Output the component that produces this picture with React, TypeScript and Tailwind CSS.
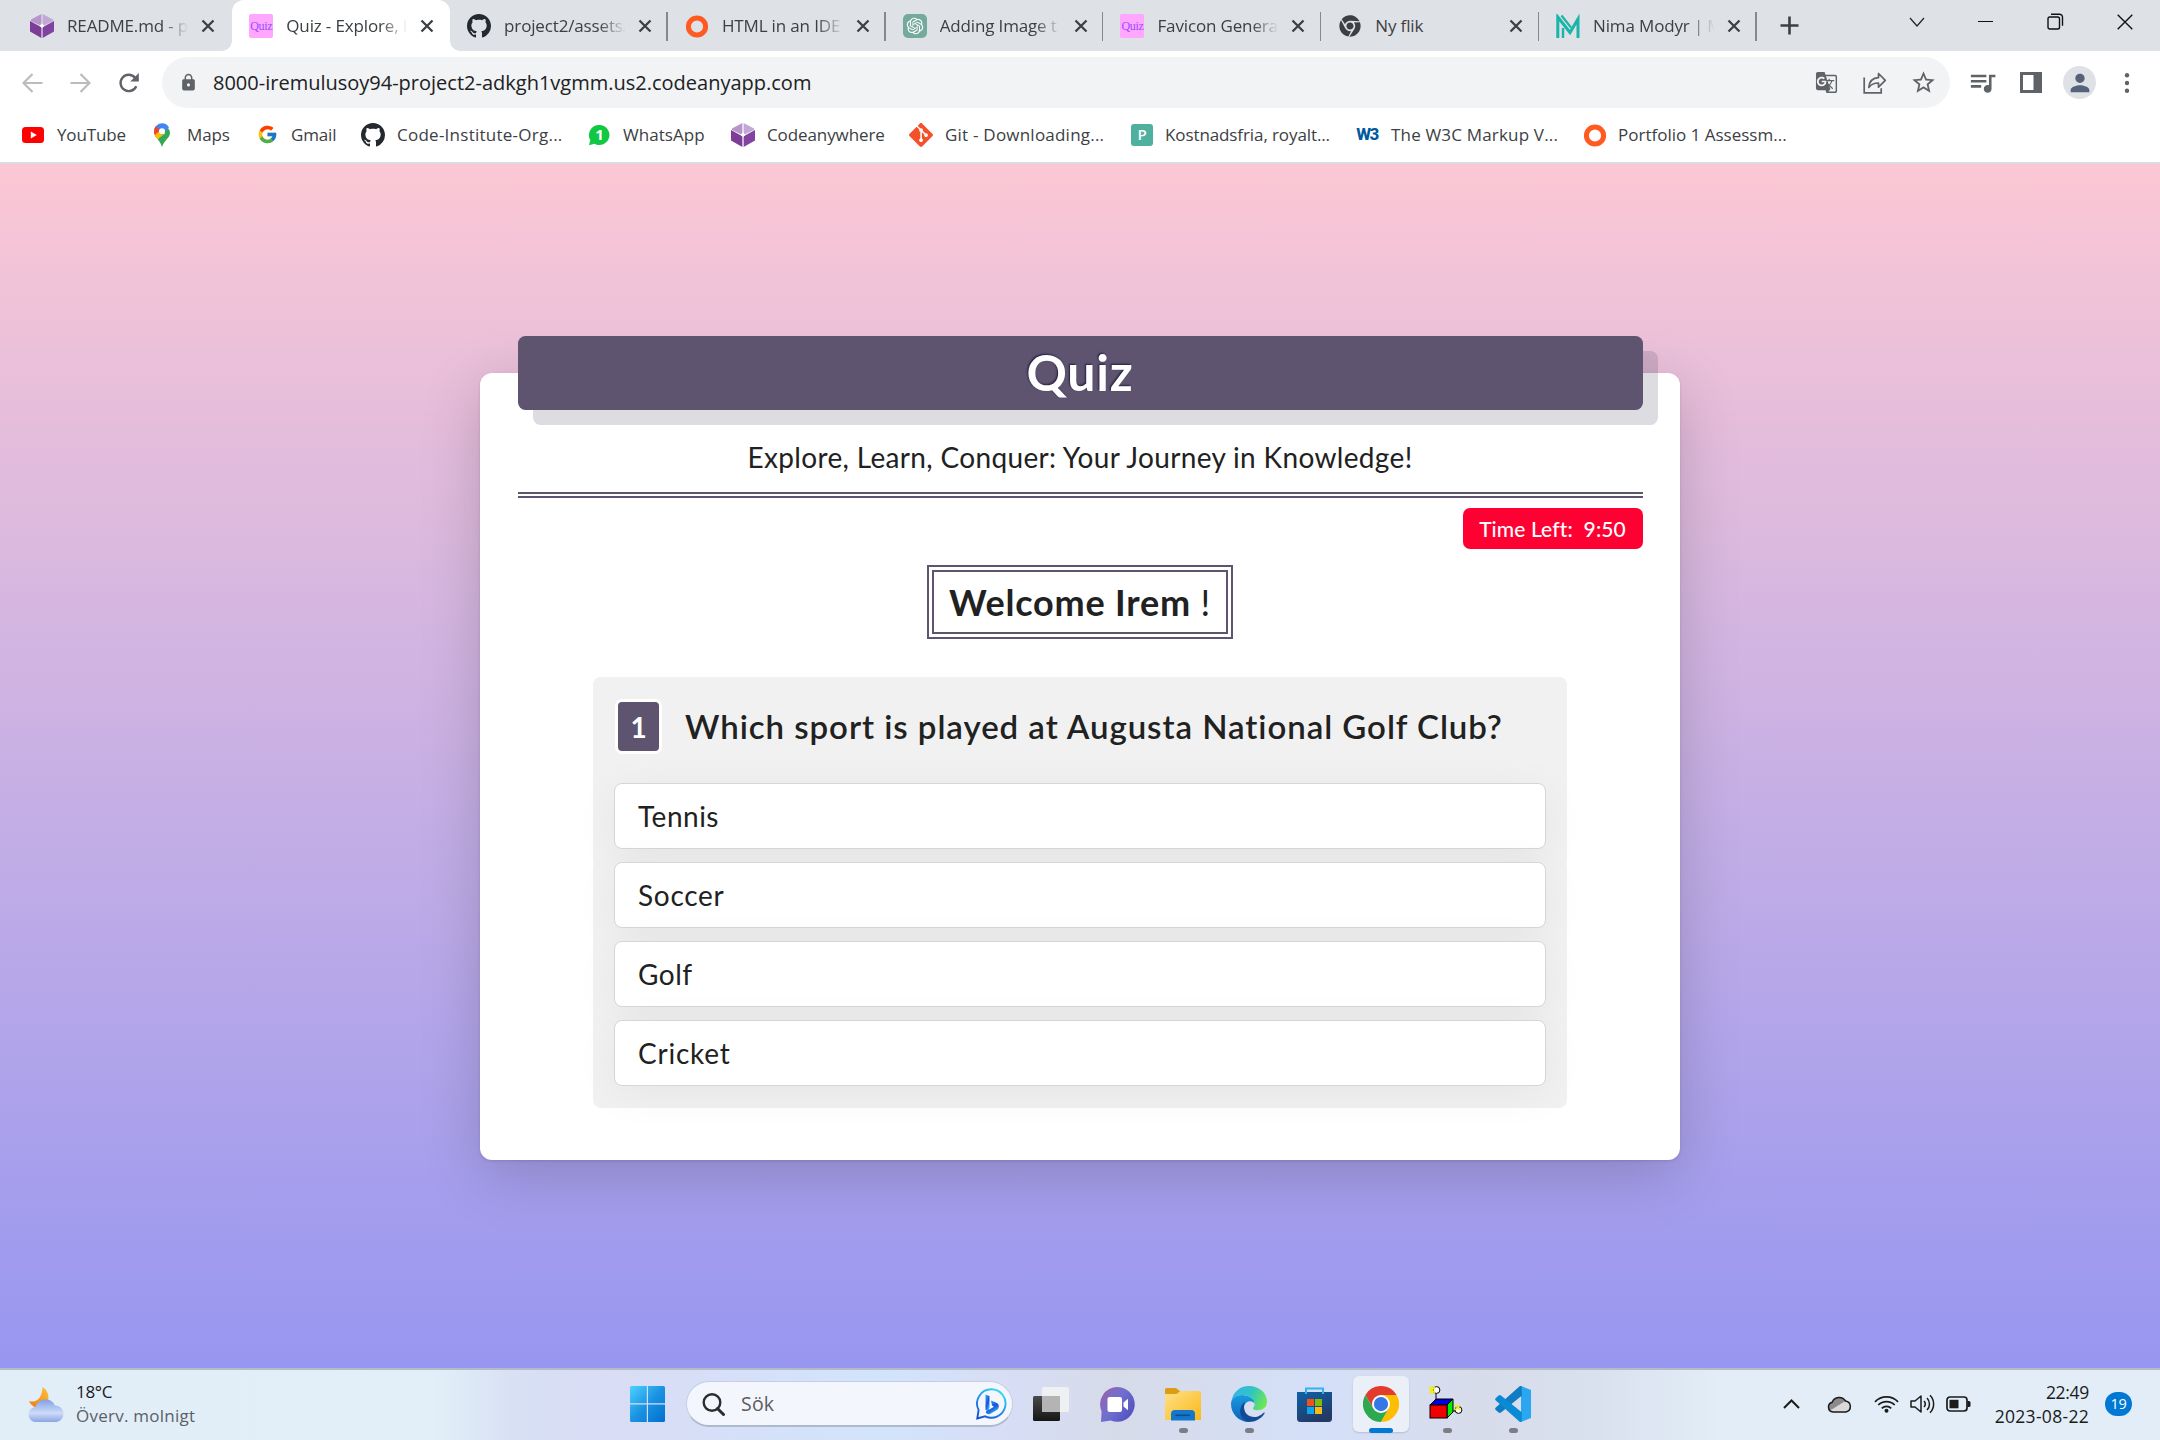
import React from "react";
import { FcGoogle } from "react-icons/fc";
import { FaChrome } from "react-icons/fa";
import { SiGit } from "react-icons/si";
import { RiOpenaiFill } from "react-icons/ri";
import { MdGTranslate, MdLock, MdPerson, MdQueueMusic, MdStarBorder } from "react-icons/md";

const UI = "font-['Open_Sans','Noto_Sans',sans-serif]";

/* ---------- small logos ---------- */

function HexLogo() {
  return (
    <svg width="24" height="24" viewBox="0 0 24 24">
      <path d="M11.4 0L1 5.6V7l10.4 5z" fill="#b795cb" />
      <path d="M12.6 0L23 5.6V7l-10.4 5z" fill="#c3a7d4" />
      <path d="M0 7l11.4 6.2V24L0 17.6z" fill="#7d3c98" />
      <path d="M24 7l-11.4 6.2V24L24 17.6z" fill="#8243a0" />
      <path d="M12 9.5l2.4 2.3L12 14l-2.4-2.2z" fill="#fff" />
    </svg>
  );
}

function QuizLogo() {
  return (
    <div className="flex h-6 w-6 items-center justify-center rounded-[2px] bg-[#ffa6ff] font-['Liberation_Serif',serif] text-[12px] leading-none tracking-[-0.3px] text-[#9a4dff]">
      Quiz
    </div>
  );
}

function GithubLogo() {
  return (
    <svg width="24" height="24" viewBox="0 0 16 16" fill="#24292f">
      <path d="M8 0C3.58 0 0 3.58 0 8c0 3.54 2.29 6.53 5.47 7.59.4.07.55-.17.55-.38 0-.19-.01-.82-.01-1.49-2.01.37-2.53-.49-2.69-.94-.09-.23-.48-.94-.82-1.13-.28-.15-.68-.52-.01-.53.63-.01 1.08.58 1.23.82.72 1.21 1.87.87 2.33.66.07-.52.28-.87.51-1.07-1.78-.2-3.64-.89-3.64-3.95 0-.87.31-1.59.82-2.15-.08-.2-.36-1.02.08-2.12 0 0 .67-.21 2.2.82.64-.18 1.32-.27 2-.27.68 0 1.36.09 2 .27 1.53-1.04 2.2-.82 2.2-.82.44 1.1.16 1.92.08 2.12.51.56.82 1.27.82 2.15 0 3.07-1.87 3.75-3.65 3.95.29.25.54.73.54 1.48 0 1.07-.01 1.93-.01 2.2 0 .21.15.46.55.38A8.013 8.013 0 0016 8c0-4.42-3.58-8-8-8z" />
    </svg>
  );
}

function RingLogo() {
  return (
    <svg width="24" height="24" viewBox="0 0 24 24">
      <circle cx="12" cy="12.5" r="8.6" fill="none" stroke="#ff5a1f" strokeWidth="5" />
    </svg>
  );
}

function OpenAiLogo() {
  return (
    <div className="flex h-6 w-6 items-center justify-center rounded-[5px] bg-[#74aa9c] text-white">
      <RiOpenaiFill size={20} />
    </div>
  );
}

function NimaLogo() {
  return (
    <svg width="24" height="24" viewBox="0 0 24 24">
      <g fill="none" stroke="#1ab5a8" strokeWidth="3">
        <path d="M1.8 24V3L14 18.5 22 5v19" />
        <path d="M7 24V14" strokeWidth="2.4" />
        <path d="M5.5 1.5L15 13.5" strokeWidth="2.2" />
      </g>
    </svg>
  );
}

function YoutubeLogo() {
  return (
    <svg width="24" height="24" viewBox="0 0 24 24">
      <rect x="1" y="4" width="22" height="16" rx="3.5" fill="#f00" />
      <path d="M9.8 8.6v6.8l6-3.4z" fill="#fff" />
    </svg>
  );
}

function MapsLogo() {
  return (
    <svg width="24" height="24" viewBox="0 0 24 24">
      <path d="M12 24c-1-3.400-2.700-5.600-4.500-8L17 4.500c1.800 1 3 3 3 5.200 0 5.300-5.500 6.800-8 14.300z" fill="#34a853" />
      <path d="M7.500 16C5.500 13.500 4 12 4 9l8-1 3.500 2.500z" fill="#fbbc04" />
      <path d="M4 8.300C4 6 5 4 6.400 2.700L12 8l-6 6.200C4.800 12.500 4 11 4 8.300z" fill="#ea4335" />
      <path d="M4.800 12.300L9.500 7l2.700 5-4.500 4.300c-1.200-1.500-2.300-2.600-2.900-4z" fill="#fbbc04" />
      <path d="M6 3.200C7.500 1.200 9.600.2 12 .2c3 0 5.600 1.600 7 4.200l-7 7.600-5-4.500z" fill="#4285f4" />
      <path d="M6 3.200l4 3.400-3 3.600L4.200 7c.2-1.500.8-2.700 1.800-3.800z" fill="#ea4335" />
      <circle cx="12" cy="8.300" r="3" fill="#fff" />
    </svg>
  );
}

function WhatsappLogo() {
  return (
    <div className="relative flex h-6 w-6 items-center justify-center">
      <svg className="absolute inset-0" width="24" height="24" viewBox="0 0 24 24">
        <path d="M12.500 2a10 10 0 1 1-5 18.700L2 22.300l1.300-5.300A10 10 0 0 1 12.500 2z" fill="#10c843" />
      </svg>
      <span className="relative pl-px font-['Open_Sans',sans-serif] text-[15px] leading-none font-bold text-white">1</span>
    </div>
  );
}

function PexelsLogo() {
  return (
    <div className="mx-[1px] flex h-[22px] w-[22px] items-center justify-center rounded-[3px] bg-[#4fb0a0] font-['Open_Sans',sans-serif] text-[15px] leading-none font-semibold text-white">
      P
    </div>
  );
}

function W3Logo() {
  return (
    <div className="flex h-6 w-6 items-center justify-center font-['Roboto',sans-serif] text-[17px] leading-none font-extrabold tracking-[-1.5px] text-[#005a9c]">
      W3
    </div>
  );
}

/* ---------- tab strip ---------- */

type Tab = { icon: React.ReactNode; title: string; active?: boolean; sep?: boolean; fade?: boolean };

const tabs: Tab[] = [
  { icon: <HexLogo />, title: "README.md - p", fade: true },
  { icon: <QuizLogo />, title: "Quiz - Explore, L", active: true, fade: true },
  { icon: <GithubLogo />, title: "project2/assets/", sep: true, fade: true },
  { icon: <RingLogo />, title: "HTML in an IDE", sep: true, fade: true },
  { icon: <OpenAiLogo />, title: "Adding Image t", sep: true, fade: true },
  { icon: <QuizLogo />, title: "Favicon Genera", sep: true, fade: true },
  { icon: <FaChrome size={22} color="#3c4043" />, title: "Ny flik", sep: true },
  { icon: <NimaLogo />, title: "Nima Modyr | M", sep: true, fade: true },
];

function TabItem({ tab, first }: { tab: Tab; first: boolean }) {
  return (
    <div
      className={
        "relative flex h-[51px] w-[217.8px] shrink-0 items-center " +
        (first ? "pl-[15.5px] " : "pl-[17px] ") +
        (tab.active ? "rounded-t-[12px] bg-white" : "")
      }
    >
      {tab.active && (
        <>
          <span className="absolute bottom-0 -left-[10px] h-[10px] w-[10px] bg-[radial-gradient(circle_at_0_0,transparent_9.5px,white_10px)]" />
          <span className="absolute -right-[10px] bottom-0 h-[10px] w-[10px] bg-[radial-gradient(circle_at_100%_0,transparent_9.5px,white_10px)]" />
        </>
      )}
      <span className="flex w-6 justify-center">{tab.icon}</span>
      <span
        className={
          "ml-[13px] w-[124px] overflow-hidden text-[17px] leading-[26px] tracking-[-0.15px] whitespace-nowrap text-[#3c4043] " +
          (tab.fade ? "[mask-image:linear-gradient(to_right,black_76%,transparent_98%)]" : "")
        }
      >
        {tab.title}
      </span>
      <svg className="ml-[10px]" width="14" height="14" viewBox="0 0 14 14">
        <path d="M1.500 1.500l11 11M12.500 1.500l-11 11" stroke="#3c4043" strokeWidth="2.300" />
      </svg>
      {tab.sep && <span className="absolute top-[12px] right-0 h-[29px] w-[1.5px] bg-[#85888c]" />}
    </div>
  );
}

function TabStrip() {
  return (
    <div className="flex h-[51px] shrink-0 bg-[#dee1e6] pl-[14.5px]">
      {tabs.map((t, i) => (
        <TabItem key={i} tab={t} first={i === 0} />
      ))}
      <div className="ml-[23px] flex h-[51px] items-center">
        <svg width="19" height="19" viewBox="0 0 19 19">
          <path d="M9.500 0.500v18M0.500 9.500h18" stroke="#3c4043" strokeWidth="2.600" />
        </svg>
      </div>
      <div className="ml-auto flex h-[43px] items-center pr-[27px]">
        <svg width="16" height="16" viewBox="0 0 16 16">
          <path d="M1 4l7 8 7-8" fill="none" stroke="#222" strokeWidth="1.200" />
        </svg>
        <span className="ml-[53px] h-[1.5px] w-[15px] bg-[#111]" />
        <svg className="ml-[54px]" width="17" height="17" viewBox="0 0 17 17" fill="none" stroke="#111" strokeWidth="1.400">
          <rect x="1" y="4" width="11.500" height="12" rx="1.800" />
          <path d="M4 1.200h8.500a3 3 0 0 1 3 3v8.500" />
        </svg>
        <svg className="ml-[53px]" width="16" height="16" viewBox="0 0 16 16">
          <path d="M.7.7l14.600 14.600M15.300.7L.7 15.300" stroke="#111" strokeWidth="1.400" />
        </svg>
      </div>
    </div>
  );
}

/* ---------- address row ---------- */

function Toolbar() {
  return (
    <div className="flex h-[63px] shrink-0 items-center bg-white pl-[22px]">
      <svg width="21" height="20" viewBox="0 0 21 20" fill="none" stroke="#babcbe" strokeWidth="2.200">
        <path d="M20.500 10H1.500M10.500 1L1.500 10l9 9" />
      </svg>
      <svg className="ml-[27px]" width="21" height="20" viewBox="0 0 21 20" fill="none" stroke="#babcbe" strokeWidth="2.200">
        <path d="M.5 10h19M10.500 1l9 9-9 9" />
      </svg>
      <svg className="ml-[27px]" width="22" height="22" viewBox="0 0 22 22">
        <path d="M18.300 14.200a8.200 8.200 0 1 1-1.200-8.500" fill="none" stroke="#5f6368" strokeWidth="2.400" />
        <path d="M20.800 1v8.500h-8.500z" fill="#5f6368" />
      </svg>
      <div className="ml-[22px] flex h-[51px] w-[1788px] items-center rounded-full bg-[#f1f3f4] pl-[17px]">
        <MdLock size={19} color="#5f6368" />
        <span className="ml-[15px] text-[20px] leading-[28px] whitespace-nowrap text-[#202124]">
          8000-iremulusoy94-project2-adkgh1vgmm.us2.codeanyapp.com
        </span>
        <div className="ml-auto flex items-center pr-[13px] text-[#5f6368]">
          <MdGTranslate size={23} />
          <svg className="ml-[25px]" width="24" height="22" viewBox="0 0 24 22" fill="none" stroke="#5f6368" strokeWidth="1.700">
            <path d="M1.200 5.500v15.300h17v-4.500" />
            <path d="M15.500 1.500v4.200C9.500 6 6.300 9.500 5.800 15.500c2.300-3.300 5-4.500 9.700-4.500v4.200L22.300 8.300z" strokeLinejoin="round" />
          </svg>
          <MdStarBorder className="ml-[23px]" size={27} />
        </div>
      </div>
      <MdQueueMusic className="ml-[17px]" size={31} color="#5f6368" />
      <svg className="ml-[22px]" width="22" height="21" viewBox="0 0 22 21">
        <path d="M0 0h22v21H0zM3 3v15h10.500V3z" fill="#5f6368" fillRule="evenodd" />
      </svg>
      <div className="ml-[21px] flex h-[33px] w-[33px] items-center justify-center rounded-full bg-[#dee1e6]">
        <MdPerson size={28} color="#56617a" />
      </div>
      <svg className="ml-[28px]" width="6" height="20" viewBox="0 0 6 20" fill="#5f6368">
        <circle cx="3" cy="2.300" r="2.200" />
        <circle cx="3" cy="10" r="2.200" />
        <circle cx="3" cy="17.700" r="2.200" />
      </svg>
    </div>
  );
}

/* ---------- bookmarks ---------- */

const bookmarks = [
  { icon: <YoutubeLogo />, label: "YouTube", box: "w-[129px]", text: "ml-[12px] tracking-[-0.15px]" },
  { icon: <MapsLogo />, label: "Maps", box: "w-[105px]", text: "ml-[13px] tracking-[-0.15px]" },
  { icon: <FcGoogle size={21} />, label: "Gmail", box: "w-[106px]", text: "ml-[12px] tracking-[-0.15px]" },
  { icon: <GithubLogo />, label: "Code-Institute-Org...", box: "w-[226px]", text: "ml-[12px] tracking-[0.25px]" },
  { icon: <WhatsappLogo />, label: "WhatsApp", box: "w-[144px]", text: "ml-[12px] tracking-[0.05px]" },
  { icon: <HexLogo />, label: "Codeanywhere", box: "w-[178px]", text: "ml-[12px] tracking-[-0.1px]" },
  { icon: <SiGit size={24} color="#f4502a" />, label: "Git - Downloading...", box: "w-[221px]", text: "ml-[12px] tracking-[0.22px]" },
  { icon: <PexelsLogo />, label: "Kostnadsfria, royalt...", box: "w-[225px]", text: "ml-[11px] tracking-[-0.1px]" },
  { icon: <W3Logo />, label: "The W3C Markup V...", box: "w-[228px]", text: "ml-[12px] tracking-[0.18px]" },
  { icon: <RingLogo />, label: "Portfolio 1 Assessm...", box: "w-[220px]", text: "ml-[11px] tracking-[0px]" },
];

function Bookmarks() {
  return (
    <div className="flex h-[50px] shrink-0 items-center border-b-2 border-[#d9dce0] bg-white pb-[7px] pl-[21px]">
      {bookmarks.map((b) => (
        <div key={b.label} className={"flex shrink-0 items-center " + b.box}>
          <span className="flex w-6 shrink-0 justify-center">{b.icon}</span>
          <span className={"text-[17px] leading-[24px] whitespace-nowrap text-[#3c4043] " + b.text}>{b.label}</span>
        </div>
      ))}
    </div>
  );
}

/* ---------- quiz page ---------- */

const options = [
  { label: "Tennis", track: "tracking-[0.5px]" },
  { label: "Soccer", track: "tracking-[0.7px]" },
  { label: "Golf", track: "tracking-[0.5px]" },
  { label: "Cricket", track: "tracking-[0.8px]" },
];

function QuizPage() {
  return (
    <main className="flex h-[1204px] shrink-0 flex-col items-center bg-linear-to-b from-[#fbc7d4] to-[#9796f0] pt-[209px] font-['Lato',sans-serif] text-[#212121]">
      <section className="h-[787px] w-[1200px] rounded-[12px] bg-white px-[37.5px] shadow-[0_15px_60px_rgba(0,0,0,0.18),0_1px_3px_rgba(0,0,0,0.12)]">
        <h1 className="-mt-[37px] flex h-[74px] items-center justify-center rounded-[7.5px] bg-[#5e5470] pb-[2px] text-[50px] leading-none font-bold tracking-[0.8px] text-white shadow-[15px_15px_0_rgba(84,80,105,0.2)] [text-shadow:-1px_-1px_2px_#221c3c]">
          Quiz
        </h1>
        <p className="flex h-[88px] items-center justify-center border-b-6 border-double border-[#5e5470] pt-[11px] text-[28px] leading-none tracking-[0.34px]">
          Explore, Learn, Conquer: Your Journey in Knowledge!
        </p>
        <div className="mt-[10px] flex justify-end">
          <div className="flex h-[41px] w-[180px] items-center justify-center rounded-[7px] bg-[#ff0033] pb-px text-[21px] leading-none font-medium tracking-[0.1px] whitespace-pre text-white">
            Time Left:  9:50
          </div>
        </div>
        <div className="mt-[16px] flex justify-center">
          <div className="flex h-[74px] w-[306px] items-center justify-center border-[7px] border-double border-[#5e5470] text-[36px] leading-none font-bold tracking-[0.8px] whitespace-pre">
            Welcome Irem <span className="font-normal">!</span>
          </div>
        </div>
        <div className="mx-auto mt-[38px] h-[431px] w-[974px] rounded-[7.5px] bg-[#f1f1f1] px-[21px] pt-[22px]">
          <div className="flex h-[55px] items-center">
            <span className="ml-px flex h-[55px] w-[47px] items-center justify-center rounded-[7px] border-3 border-white bg-[#5e5470] text-[28px] leading-none font-bold text-white">
              1
            </span>
            <h2 className="ml-[23px] text-[33px] leading-none font-semibold tracking-[0.95px] whitespace-nowrap">
              Which sport is played at Augusta National Golf Club?
            </h2>
          </div>
          <ul className="mt-[28.5px] flex flex-col gap-[13px]">
            {options.map((o) => (
              <li
                key={o.label}
                className={
                  "flex h-[66px] items-center rounded-[8px] border border-[#d6d6d6] bg-white pl-[23px] text-[28px] leading-none shadow-[0_8px_45px_rgba(0,0,0,0.05)] " +
                  o.track
                }
              >
                {o.label}
              </li>
            ))}
          </ul>
        </div>
      </section>
    </main>
  );
}

/* ---------- taskbar ---------- */

function WeatherIcon() {
  return (
    <svg width="37" height="37" viewBox="0 0 37 37">
      <defs>
        <linearGradient id="moon" x1="0" y1="1" x2="1" y2="0">
          <stop offset="0" stopColor="#ee7a12" />
          <stop offset="1" stopColor="#fdc23c" />
        </linearGradient>
        <linearGradient id="cloud" x1="0" y1="0" x2="0" y2="1">
          <stop offset="0" stopColor="#7f9fe6" />
          <stop offset="0.600" stopColor="#cfdcf8" />
          <stop offset="1" stopColor="#8aa4e4" />
        </linearGradient>
      </defs>
      <path d="M14.500 1c5 3 7.500 9 5 15s-8 8-13 5C4 19.500 1.500 17 1 15c5 1.500 9-.5 11-4 1.800-3 2.500-6.500 2.500-10z" fill="url(#moon)" />
      <path d="M8.500 36a7.500 7.500 0 0 1-1-15A10.500 10.500 0 0 1 27 19.500 8.300 8.300 0 0 1 28.500 36z" fill="url(#cloud)" />
    </svg>
  );
}

function StartIcon() {
  return (
    <svg width="35" height="36" viewBox="0 0 35 36">
      <defs>
        <linearGradient id="start" x1="0" y1="0" x2="1" y2="1">
          <stop offset="0" stopColor="#4cd2ff" />
          <stop offset="0.500" stopColor="#1b93e2" />
          <stop offset="1" stopColor="#006fd0" />
        </linearGradient>
      </defs>
      <path
        fill="url(#start)"
        d="M1.500 0h15.300v17.300H0V1.500A1.500 1.500 0 0 1 1.500 0zM18 0h15.500A1.500 1.500 0 0 1 35 1.500v15.800H18zM0 18.600h16.800V36H1.500A1.500 1.500 0 0 1 0 34.500zM18 18.600h17v15.900a1.500 1.500 0 0 1-1.500 1.500H18z"
      />
    </svg>
  );
}

function BingIcon() {
  return (
    <svg width="31" height="32" viewBox="0 0 31 32">
      <defs>
        <linearGradient id="bing" x1="0" y1="1" x2="0.600" y2="0">
          <stop offset="0" stopColor="#1746c8" />
          <stop offset="0.500" stopColor="#2389e4" />
          <stop offset="1" stopColor="#2ed3f2" />
        </linearGradient>
        <linearGradient id="bingB" x1="0" y1="0" x2="0.600" y2="1">
          <stop offset="0" stopColor="#2fb4f2" />
          <stop offset="0.600" stopColor="#1c4fdc" />
          <stop offset="1" stopColor="#2fc6f0" />
        </linearGradient>
      </defs>
      <path d="M15.500 1.300a14.200 14.200 0 1 1-6.300 27L1.300 30.500l1.300-8.600A14.200 14.200 0 0 1 15.500 1.300z" fill="none" stroke="url(#bing)" strokeWidth="1.900" />
      <path d="M9.500 6.500l4 1.500v11.300l-1 4.700-3-2.200z" fill="url(#bingB)" />
      <path d="M15 12.500l6 2.600c2.500 1.600 2.500 5 .3 6.600L14 26c-2 .8-4-.5-4.300-2.200l8.300-5-2-1.200z" fill="url(#bingB)" />
    </svg>
  );
}

function TaskViewIcon() {
  return (
    <svg width="36" height="36" viewBox="0 0 36 36">
      <defs>
        <linearGradient id="tvd" x1="0" y1="0" x2="0" y2="1">
          <stop offset="0" stopColor="#4a4a4a" />
          <stop offset="1" stopColor="#151515" />
        </linearGradient>
      </defs>
      <rect x="0" y="10" width="27" height="25" rx="1.500" fill="url(#tvd)" />
      <rect x="9" y="1" width="27" height="25" rx="1.500" fill="#f0f0f0" fillOpacity="0.950" />
      <rect x="9" y="10" width="18" height="16" fill="#b4b4b4" />
    </svg>
  );
}

function ChatIcon() {
  return (
    <svg width="35" height="35" viewBox="0 0 35 35">
      <defs>
        <linearGradient id="chat" x1="0" y1="0.200" x2="0.900" y2="0.800">
          <stop offset="0" stopColor="#9464b0" />
          <stop offset="0.500" stopColor="#6f6fd0" />
          <stop offset="1" stopColor="#5452c2" />
        </linearGradient>
      </defs>
      <path d="M17.500 0a17.400 17.400 0 1 1-6.800 33.500L1 35l.6-10.500A17.400 17.400 0 0 1 17.500 0z" fill="url(#chat)" />
      <rect x="7.500" y="10" width="14.500" height="15" rx="2" fill="#fff" />
      <path d="M23.500 15.500l4.500-3.800v11.600l-4.500-3.800z" fill="#fff" />
    </svg>
  );
}

function FolderIcon() {
  return (
    <svg width="36" height="36" viewBox="0 0 36 36">
      <defs>
        <linearGradient id="fold" x1="0" y1="0" x2="1" y2="1">
          <stop offset="0" stopColor="#ffe08a" />
          <stop offset="1" stopColor="#f9b916" />
        </linearGradient>
      </defs>
      <path d="M0 3.500A1.500 1.500 0 0 1 1.500 2H11l4.500 3.500V10H0z" fill="#dc9d12" />
      <path d="M0 8h11.500l4-3H34.500A1.500 1.500 0 0 1 36 6.500V34H0z" fill="url(#fold)" />
      <path d="M6 34.500V28a4 4 0 0 1 4-4h16a4 4 0 0 1 4 4v6.500z" fill="#1577cc" />
      <rect x="10.500" y="28.500" width="14.500" height="1.600" fill="#0a4f8c" />
    </svg>
  );
}

function EdgeIcon() {
  return (
    <svg width="36" height="36" viewBox="0 0 36 36">
      <defs>
        <linearGradient id="edgeTop" x1="0" y1="0.300" x2="1" y2="0.600">
          <stop offset="0" stopColor="#36b5ea" />
          <stop offset="0.500" stopColor="#2fc4c4" />
          <stop offset="1" stopColor="#6ee84f" />
        </linearGradient>
        <linearGradient id="edgeLeft" x1="0.500" y1="0" x2="0.500" y2="1">
          <stop offset="0" stopColor="#1a9be0" />
          <stop offset="1" stopColor="#0c62b8" />
        </linearGradient>
      </defs>
      <path d="M0 18C0 12 5 9 11 9c7 0 13 4 13 9-3-5-11-3-11 4 0 8 6 14 5 14C8 36 0 28 0 18z" fill="url(#edgeLeft)" />
      <path d="M14 15.500c-3 7 .5 15.500 9 15.500 4.500 0 7.500-2.500 9.600-4.300.8-.5 1.300 0 .9.800C30 33 24.500 36 18 36 11 34.500 8 28 9.500 22.500c.8-3 2.500-5.500 4.500-7z" fill="#134a97" />
      <path d="M.5 15C2 6 9 0 18 0c10 0 18 7 18 15.500 0 6-4.500 8.700-9 8.700-3.500 0-5-1-5-1.800 0-1 1.700-2 1.700-4.400C23.700 13 18 9 11.500 9 6 9 2 11.500.5 15z" fill="url(#edgeTop)" />
    </svg>
  );
}

function StoreIcon() {
  return (
    <svg width="36" height="36" viewBox="0 0 36 36">
      <defs>
        <linearGradient id="store" x1="0" y1="0" x2="0.500" y2="1">
          <stop offset="0" stopColor="#0f62aa" />
          <stop offset="1" stopColor="#233a63" />
        </linearGradient>
      </defs>
      <path d="M0 6h35v26.500A3.500 3.500 0 0 1 31.500 36h-28A3.500 3.500 0 0 1 0 32.500z" fill="url(#store)" />
      <path d="M9 8V2.500h17V8" fill="none" stroke="#31b3f0" strokeWidth="2" />
      <rect x="10" y="13" width="7" height="7" fill="#f1511b" />
      <rect x="18" y="13" width="7" height="7" fill="#80bb0a" />
      <rect x="10" y="21" width="7" height="7" fill="#0fa5ee" />
      <rect x="18" y="21" width="7" height="7" fill="#fbb912" />
    </svg>
  );
}

function ChromeIcon() {
  return (
    <svg width="36" height="36" viewBox="0 0 48 48">
      <path d="M3.200 12A24 24 0 0 1 44.800 12H24L13.600 30z" fill="#e33b2e" />
      <path d="M3.200 12L13.600 30H34.400L24 48A24 24 0 0 1 3.200 12z" fill="#2da94f" />
      <path d="M44.800 12A24 24 0 0 1 24 48L34.400 30 24 12z" fill="#fdbd00" />
      <circle cx="24" cy="24" r="12" fill="#fff" />
      <circle cx="24" cy="24" r="9.500" fill="#3578e5" />
    </svg>
  );
}

function CubeIcon() {
  return (
    <svg width="36" height="36" viewBox="0 0 36 36" stroke="#000" strokeWidth="1">
      <path d="M7 13V6M24 25h4" />
      <path d="M1 19l6-6h17l-6 6z" fill="#0000e0" />
      <path d="M18 19l6-6v13l-6 6z" fill="#00f000" />
      <rect x="1" y="19" width="17" height="13" fill="#f00000" />
      <circle cx="7.500" cy="4" r="3.400" fill="#fff" />
      <circle cx="29.500" cy="24" r="3.400" fill="#fff" />
      <path d="M0 1l6 6M0 7l6-6M3 0v8M26 19l5 5M26 24l5-5" stroke="#f4ee00" strokeWidth="1.600" />
    </svg>
  );
}

function CodeIcon() {
  return (
    <svg width="36" height="36" viewBox="0 0 36 36">
      <path d="M26 0L36 4V32l-10 4z" fill="#2aa7f0" />
      <path d="M26.500 0L27 9.500 6 26.500a2 2 0 0 1-2.400 0L.8 24a1.800 1.800 0 0 1 0-2.600L23.500 1.200A3 3 0 0 1 26.500 0z" fill="#0f7cc4" />
      <path d="M26.500 36L27 26.500 6 9.500a2 2 0 0 0-2.400 0L.8 12a1.800 1.800 0 0 0 0 2.600l22.700 20.200a3 3 0 0 0 3 1.200z" fill="#0a8ad4" />
    </svg>
  );
}

const apps: { icon: React.ReactNode; state?: "open" | "active" }[] = [
  { icon: <TaskViewIcon /> },
  { icon: <ChatIcon /> },
  { icon: <FolderIcon />, state: "open" },
  { icon: <EdgeIcon />, state: "open" },
  { icon: <StoreIcon /> },
  { icon: <ChromeIcon />, state: "active" },
  { icon: <CubeIcon />, state: "open" },
  { icon: <CodeIcon />, state: "open" },
];

function Taskbar() {
  return (
    <footer className="flex h-[72px] shrink-0 items-center border-t-2 border-[#b3bac8] bg-[linear-gradient(to_right,#e1edf7_0px,#e2eff8_430px,#d7e0f4_520px,#d9dcf5_600px,#d2e4fa_880px,#d7ddf5_1010px,#d6dbe9_1120px,#d4dff8_1320px,#d7dcea_1480px,#d9e1ee_1600px,#e2edf7_1720px,#e2edf7_2160px)] pb-[2px] pl-[28px]">
      <WeatherIcon />
      <div className="ml-[11px] w-[554px] pb-px text-[17px] leading-[24px] whitespace-nowrap">
        <div className="tracking-[-0.3px] text-[#1b1b1b]">18°C</div>
        <div className="tracking-[0.25px] text-[#5b6067]">Överv. molnigt</div>
      </div>
      <StartIcon />
      <div className="ml-[21px] flex h-[46px] w-[327px] items-center rounded-full border border-b-2 border-[#c5cfe3] border-b-[#aeb9d0] bg-[#f3f6fd] pr-[5px] pl-[15px]">
        <svg width="23" height="24" viewBox="0 0 23 24" fill="none" stroke="#2d2d2d" strokeWidth="2.400">
          <circle cx="10" cy="10.500" r="8.300" />
          <path d="M15.500 16.500l6 6" strokeWidth="3" strokeLinecap="round" />
        </svg>
        <span className="ml-[16px] text-[19.5px] leading-none tracking-[0.2px] text-[#5c5c5c]">Sök</span>
        <span className="ml-auto">
          <BingIcon />
        </span>
      </div>
      <div className="ml-[5px] flex">
        {apps.map((a, i) => (
          <div key={i} className="flex w-[66px] justify-center">
            <div
              className={
                "relative flex h-[56px] w-[56px] items-center justify-center rounded-[6px] " +
                (a.state === "active" ? "bg-[#ebeff8] shadow-[0_1px_2px_rgba(0,0,0,0.15)]" : "")
              }
            >
              {a.icon}
              {a.state === "open" && <span className="absolute -bottom-px h-[5px] w-[9px] rounded-full bg-[#7b7e86]" />}
              {a.state === "active" && <span className="absolute -bottom-px h-[5px] w-[24px] rounded-full bg-[#0078d4]" />}
            </div>
          </div>
        ))}
      </div>
      <div className="ml-[237px] flex items-center">
        <svg width="17" height="10" viewBox="0 0 17 10">
          <path d="M1 9l7.500-7.500L16 9" fill="none" stroke="#1b1b1b" strokeWidth="2" />
        </svg>
        <svg className="ml-[27px]" width="25" height="17" viewBox="0 0 25 17">
          <path d="M6 16a5 5 0 0 1-.8-9.800A7.500 7.500 0 0 1 18.500 5 5.600 5.600 0 0 1 19 16z" fill="#d9d9d9" />
          <path d="M5.200 6.200A7.500 7.500 0 0 1 18.500 5l-5 3-8 5-3.500 1a5 5 0 0 1 3.200-7.800z" fill="#8b8b8b" />
          <path d="M6 16a5 5 0 0 1-.8-9.800A7.500 7.500 0 0 1 18.500 5 5.600 5.600 0 0 1 19 16z" fill="none" stroke="#1b1b1b" strokeWidth="1.500" />
        </svg>
        <svg className="ml-[22px]" width="25" height="18" viewBox="0 0 25 18" fill="none" stroke="#1b1b1b" strokeWidth="1.700">
          <path d="M1 6.800a16 16 0 0 1 23 0M4.300 10a11.500 11.500 0 0 1 16.400 0M7.800 13.300a6.700 6.700 0 0 1 9.400 0" />
          <circle cx="12.500" cy="15.800" r="2" fill="#1b1b1b" stroke="none" />
        </svg>
        <svg className="ml-[11px]" width="25" height="20" viewBox="0 0 25 20" fill="none" stroke="#1b1b1b" strokeWidth="1.500">
          <path d="M1 7v6h4l6 5V2L5 7z" strokeLinejoin="round" />
          <path d="M14 7a4.500 4.500 0 0 1 0 6M17 4a8.500 8.500 0 0 1 0 12M20 1.200a12.500 12.500 0 0 1 0 17.600" />
        </svg>
        <svg className="ml-[11px]" width="25" height="16" viewBox="0 0 25 16">
          <rect x="1" y="1" width="20" height="14" rx="3" fill="none" stroke="#1b1b1b" strokeWidth="1.700" />
          <rect x="3.500" y="3.800" width="9" height="8.500" fill="#1b1b1b" />
          <path d="M21.500 5h1.500a1.500 1.500 0 0 1 1.500 1.500v3A1.500 1.500 0 0 1 23 11h-1.500z" fill="#1b1b1b" />
        </svg>
      </div>
      <div className="ml-auto pb-px text-right text-[17.5px] leading-[24px] text-[#1b1b1b]">
        <div className="tracking-[-0.3px]">22:49</div>
        <div className="tracking-[0.3px]">2023-08-22</div>
      </div>
      <div className="mr-[28px] ml-[16px] flex h-[24px] w-[27px] items-center justify-center rounded-full bg-[#0078d4] text-[14.5px] leading-none tracking-[-0.3px] text-white">
        19
      </div>
    </footer>
  );
}

export default function App() {
  return (
    <div className={"flex h-[1440px] w-[2160px] flex-col overflow-hidden " + UI}>
      <TabStrip />
      <Toolbar />
      <Bookmarks />
      <QuizPage />
      <Taskbar />
    </div>
  );
}
